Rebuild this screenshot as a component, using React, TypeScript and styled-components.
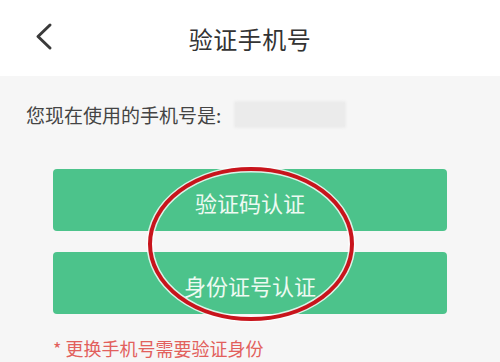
import styled, { createGlobalStyle } from "styled-components";

const GlobalStyle = createGlobalStyle`
    html, body {
        margin: 0;
        padding: 0;
        background: #f6f6f6;
        font-family: "Noto Sans CJK SC", "Noto Sans", sans-serif;
    }
`;

const Page = styled.div`
    width: 500px;
    height: 362px;
    overflow: hidden;
    background: #f6f6f6;
`;

const Header = styled.header`
    height: 76px;
    background: #ffffff;
    display: flex;
    align-items: center;
    justify-content: center;
    position: relative;
`;

const BackButton = styled.div`
    position: absolute;
    left: 33px;
    top: 22px;
    width: 24px;
    height: 30px;
`;

const Title = styled.h1`
    margin: 0;
    font-size: 24px;
    font-weight: 400;
    color: #333333;
    letter-spacing: 0.5px;
`;

const PhoneRow = styled.div`
    display: flex;
    align-items: center;
    padding: 25px 0 0 26px;
    height: 27px;
`;

const PhoneLabel = styled.span`
    font-size: 19px;
    color: #444444;
    line-height: 27px;
`;

const BlurBox = styled.div`
    width: 112px;
    height: 27px;
    margin-left: 13px;
    background: #ebebeb;
    border-radius: 2px;
    filter: blur(1px);
`;

const Buttons = styled.div`
    position: relative;
    display: flex;
    flex-direction: column;
    gap: 21px;
    margin: 41px 53px 0;
`;

const GreenButton = styled.button`
    height: 62px;
    border: none;
    border-radius: 4px;
    background: #4cc38b;
    color: #eefaf2;
    font-family: inherit;
    font-size: 22px;
    display: flex;
    align-items: center;
    justify-content: center;
    padding-top: ${(p: { $offset?: number }) => p.$offset ?? 0}px;
`;

const Ring = styled.svg`
    position: absolute;
    left: 93px;
    top: -4px;
    pointer-events: none;
`;

const Note = styled.p`
    margin: 22px 0 0 53px;
    font-size: 18px;
    color: #e2605c;
    line-height: 24px;
`;

export default function App() {
    return (
        <Page>
            <GlobalStyle />
            <Header>
                <BackButton>
                    <svg width="24" height="30" viewBox="0 0 24 30">
                        <path d="M17 3 L5 14.5 L17 26" fill="none" stroke="#3a3a3a" strokeWidth="3" strokeLinecap="round" strokeLinejoin="round" />
                    </svg>
                </BackButton>
                <Title>验证手机号</Title>
            </Header>
            <PhoneRow>
                <PhoneLabel>您现在使用的手机号是:</PhoneLabel>
                <BlurBox />
            </PhoneRow>
            <Buttons>
                <GreenButton $offset={4}>验证码认证</GreenButton>
                <GreenButton $offset={4}>身份证号认证</GreenButton>
                <Ring width="210" height="158" viewBox="0 0 210 158">
                    <ellipse cx="105" cy="79" rx="101" ry="75" fill="none" stroke="#ffffff" strokeWidth="7" opacity="0.8" />
                    <ellipse cx="105" cy="79" rx="101" ry="75" fill="none" stroke="#c8141c" strokeWidth="4" />
                </Ring>
            </Buttons>
            <Note>* 更换手机号需要验证身份</Note>
        </Page>
    );
}
